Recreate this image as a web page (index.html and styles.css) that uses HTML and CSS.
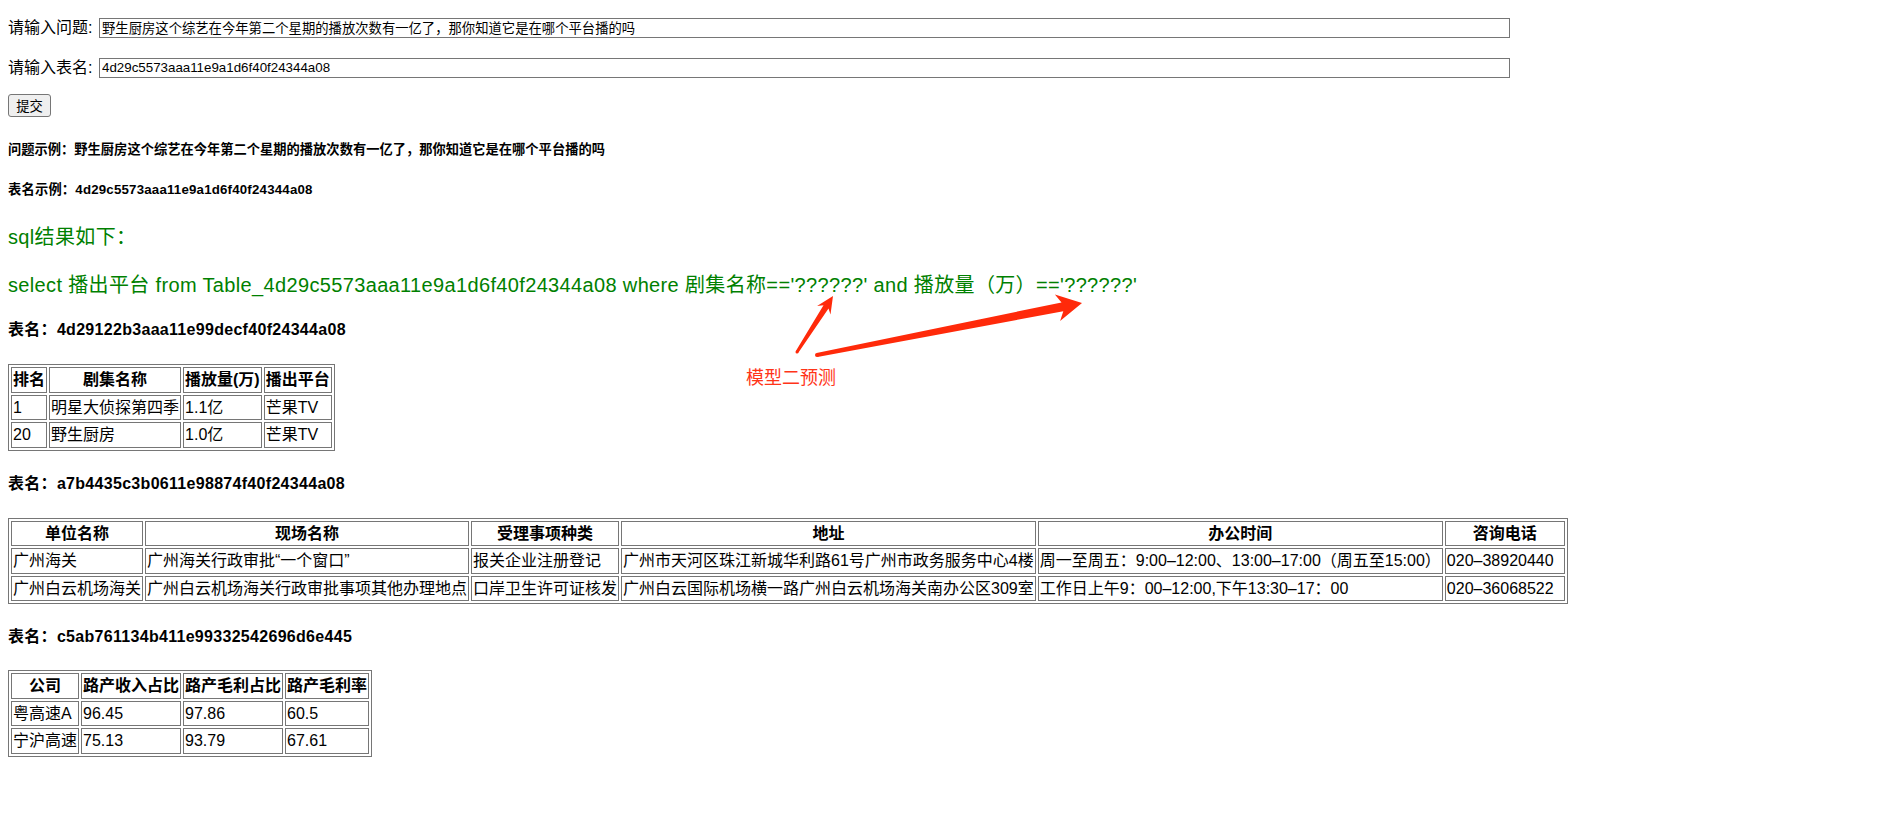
FILE: index.html
```html
<!DOCTYPE html>
<html lang="zh">
<head>
<meta charset="utf-8">
<title>SQL 预测</title>
<link rel="stylesheet" href="styles.css">
</head>
<body>
<div class="page">
  <form class="query-form">
    <div class="field">
      <label class="field-label" for="q">请输入问题:</label>
      <input class="field-input" id="q" type="text" value="野生厨房这个综艺在今年第二个星期的播放次数有一亿了，那你知道它是在哪个平台播的吗">
    </div>
    <div class="field field-second">
      <label class="field-label" for="t">请输入表名:</label>
      <input class="field-input" id="t" type="text" value="4d29c5573aaa11e9a1d6f40f24344a08">
    </div>
    <button class="submit" type="button">提交</button>
  </form>

  <h5 class="example ex-q">问题示例：野生厨房这个综艺在今年第二个星期的播放次数有一亿了，那你知道它是在哪个平台播的吗</h5>
  <h5 class="example ex-t">表名示例：4d29c5573aaa11e9a1d6f40f24344a08</h5>

  <p class="sql sql-title">sql结果如下：</p>
  <p class="sql sql-text">select 播出平台 from Table_4d29c5573aaa11e9a1d6f40f24344a08 where 剧集名称=='??????' and 播放量（万）=='??????'</p>

  <h4 class="table-name tn-first">表名：4d29122b3aaa11e99decf40f24344a08</h4>
  <table class="data">
    <tr><th>排名</th><th>剧集名称</th><th>播放量(万)</th><th>播出平台</th></tr>
    <tr><td>1</td><td>明星大侦探第四季</td><td>1.1亿</td><td>芒果TV</td></tr>
    <tr><td>20</td><td>野生厨房</td><td>1.0亿</td><td>芒果TV</td></tr>
  </table>

  <h4 class="table-name">表名：a7b4435c3b0611e98874f40f24344a08</h4>
  <table class="data">
    <tr><th>单位名称</th><th>现场名称</th><th>受理事项种类</th><th>地址</th><th>办公时间</th><th class="col-phone">咨询电话</th></tr>
    <tr><td>广州海关</td><td>广州海关行政审批“一个窗口”</td><td>报关企业注册登记</td><td>广州市天河区珠江新城华利路61号广州市政务服务中心4楼</td><td>周一至周五：9:00–12:00、13:00–17:00（周五至15:00）</td><td>020–38920440</td></tr>
    <tr><td>广州白云机场海关</td><td>广州白云机场海关行政审批事项其他办理地点</td><td>口岸卫生许可证核发</td><td>广州白云国际机场横一路广州白云机场海关南办公区309室</td><td>工作日上午9：00–12:00,下午13:30–17：00</td><td>020–36068522</td></tr>
  </table>

  <h4 class="table-name">表名：c5ab761134b411e99332542696d6e445</h4>
  <table class="data data-last">
    <tr><th>公司</th><th>路产收入占比</th><th>路产毛利占比</th><th>路产毛利率</th></tr>
    <tr><td>粤高速A</td><td>96.45</td><td>97.86</td><td>60.5</td></tr>
    <tr><td>宁沪高速</td><td>75.13</td><td>93.79</td><td>67.61</td></tr>
  </table>

  <div class="annotation-label">模型二预测</div>
  <svg class="annotation-arrows" viewBox="0 0 1897 829" xmlns="http://www.w3.org/2000/svg">
    <polygon class="arrow" points="798.3,352.8 828.5,308.5 830.5,314.6 833,296 817.1,306.0 823.5,305.3 795.7,351.2"/>
    <circle class="arrow" cx="797" cy="352" r="1.5"/>
    <polygon class="arrow" points="817.4,357.0 1063.3,311.3 1060.1,321.0 1082,303 1054.9,294.6 1061.5,302.4 816.6,353.0"/>
    <circle class="arrow" cx="817" cy="355" r="2"/>
  </svg>
</div>
</body>
</html>
```

FILE: styles.css
```css
html, body {
  margin: 0;
  padding: 0;
  background: #ffffff;
}

body {
  font-family: "Liberation Sans", "Noto Sans CJK SC", sans-serif;
  font-size: 16px;
  color: #000000;
}

.page {
  position: relative;
  padding: 8px;
  min-height: 813px;
}

.query-form {
  margin: 9px 0 0;
  display: flex;
  flex-direction: column;
  align-items: flex-start;
}

.field {
  display: flex;
  align-items: center;
  height: 21px;
}

.field-second {
  margin-top: 19px;
}

.field-label {
  flex: none;
  width: 91px;
  line-height: 21px;
  white-space: nowrap;
}

.field-input {
  flex: none;
  width: 1411px;
  height: 20px;
  box-sizing: border-box;
  margin: 0;
  padding: 0 2px;
  border: 1px solid #767676;
  border-radius: 0;
  background: #ffffff;
  color: #000000;
  font-family: "Liberation Sans", "Noto Sans CJK SC", sans-serif;
  font-size: 13.33px;
}

.submit {
  margin: 16px 0 0;
  width: 43px;
  height: 23px;
  padding: 0;
  box-sizing: border-box;
  border: 1px solid #767676;
  border-radius: 3px;
  background: #efefef;
  color: #000000;
  font-family: "Liberation Sans", "Noto Sans CJK SC", sans-serif;
  font-size: 13.33px;
}

.example {
  margin: 0;
  font-size: 13.28px;
  font-weight: bold;
  line-height: 16px;
}

.ex-q {
  margin-top: 25px;
}

.ex-t {
  margin-top: 24px;
  letter-spacing: 0.2px;
}

.sql {
  margin: 0;
  color: #008000;
  font-size: 20px;
  line-height: 24px;
  white-space: nowrap;
  letter-spacing: 0.35px;
}

.sql-title {
  margin-top: 27px;
}

.sql-text {
  margin-top: 24px;
}

.table-name {
  margin: 23px 0 0;
  font-size: 16px;
  font-weight: bold;
  line-height: 20px;
  letter-spacing: 0.3px;
}

.data {
  margin-top: 24px;
  border-collapse: separate;
  border-spacing: 2px;
  border: 1px solid #767676;
  font-size: 16px;
}

.data-last {
  margin-top: 23px;
}

.data th,
.data td {
  border: 1px solid #767676;
  padding: 1px;
  line-height: 21.5px;
  white-space: nowrap;
}

.data th {
  font-weight: bold;
  text-align: center;
}

.data td {
  text-align: left;
}

.data .col-phone {
  width: 116px;
}

.annotation-label {
  position: absolute;
  left: 746px;
  top: 366px;
  color: #ff3418;
  font-size: 18px;
  line-height: 24px;
  white-space: nowrap;
}

.annotation-arrows {
  position: absolute;
  left: 0;
  top: 0;
  width: 1897px;
  height: 829px;
  pointer-events: none;
}

.arrow {
  fill: #ff2a0a;
}
```
